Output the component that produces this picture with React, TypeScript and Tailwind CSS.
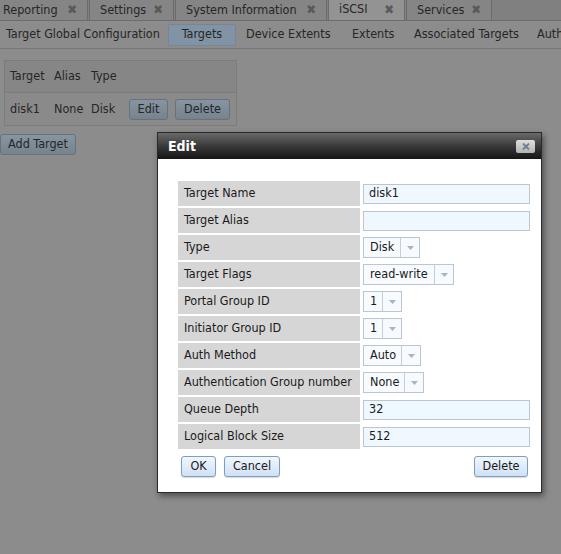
import React from "react";

const font = "font-['DejaVu_Sans_Condensed','DejaVu_Sans',sans-serif]";

function Tab({ label, width, active }: { label: string; width: string; active?: boolean }) {
  return (
    <div
      className={`${width} shrink-0 flex items-center justify-between pl-[10px] pr-[10px] border-r border-l border-[#6c6c6c] ${
        active ? "bg-[#939393] h-[21px]" : "bg-[#858585] h-[20px]"
      }`}
    >
      <span className="text-[#262626] whitespace-nowrap">{label}</span>
      <span className="text-[#595959] font-bold text-[13px]">✖</span>
    </div>
  );
}

function DimButton({ children, className = "" }: { children: React.ReactNode; className?: string }) {
  return (
    <button
      className={`h-[21px] rounded-[3px] border border-[#66727e] bg-gradient-to-b from-[#8794a1] to-[#76838f] text-[#262626] leading-none whitespace-nowrap ${className}`}
    >
      {children}
    </button>
  );
}

function LightButton({ children, width }: { children: React.ReactNode; width: string }) {
  return (
    <button
      className={`${width} h-[21px] rounded-[3px] border border-[#7d9ec2] bg-gradient-to-b from-[#f1f7fe] to-[#cfe1f4] text-[#1a1a1a] leading-none shadow-[0_1px_1px_rgba(0,0,0,0.15)]`}
    >
      {children}
    </button>
  );
}

function Select({ value, width }: { value: string; width: string }) {
  return (
    <div className={`${width} h-[21px] flex border border-[#bcc6d0] bg-[#f7fbff]`}>
      <div className="flex-1 flex items-center pl-[6px] text-[#1a1a1a]">{value}</div>
      <div className="w-[19px] border-l border-[#c6cfd8] flex items-center justify-center">
        <svg width="7" height="4" viewBox="0 0 7 4">
          <path d="M0 0 L7 0 L3.5 4 Z" fill="#a8b4c0" />
        </svg>
      </div>
    </div>
  );
}

function TextInput({ value }: { value: string }) {
  return (
    <div className="w-[167px] h-[20px] border border-[#bcc6d0] bg-[#f0f8ff] flex items-center pl-[5px] text-[#1a1a1a]">
      {value}
    </div>
  );
}

const rows: { label: string; field: React.ReactNode }[] = [
  { label: "Target Name", field: <TextInput value="disk1" /> },
  { label: "Target Alias", field: <TextInput value="" /> },
  { label: "Type", field: <Select value="Disk" width="w-[57px]" /> },
  { label: "Target Flags", field: <Select value="read-write" width="w-[91px]" /> },
  { label: "Portal Group ID", field: <Select value="1" width="w-[39px]" /> },
  { label: "Initiator Group ID", field: <Select value="1" width="w-[39px]" /> },
  { label: "Auth Method", field: <Select value="Auto" width="w-[58px]" /> },
  { label: "Authentication Group number", field: <Select value="None" width="w-[61px]" /> },
  { label: "Queue Depth", field: <TextInput value="32" /> },
  { label: "Logical Block Size", field: <TextInput value="512" /> },
];

export default function App() {
  return (
    <div className={`relative w-[561px] h-[554px] overflow-hidden bg-[#8c8c8c] text-[12.5px] ${font}`}>
      {/* top tabs */}
      <div className="flex h-[21px] bg-[#808080] border-b border-[#6c6c6c] items-end">
        <div className="-ml-[8px] flex items-end gap-[1px]">
          <Tab label="Reporting" width="w-[96px]" />
          <Tab label="Settings" width="w-[85px]" />
          <Tab label="System Information" width="w-[152px]" />
          <Tab label="iSCSI" width="w-[77px]" active />
          <Tab label="Services" width="w-[86px]" />
        </div>
      </div>

      {/* sub tabs */}
      <div className="flex items-center h-[28px] border-b border-[#767676] text-[#262626] whitespace-nowrap">
        <span className="shrink-0 pl-[6px] w-[168px]">Target Global Configuration</span>
        <div className="shrink-0 w-[68px] h-[22px] flex items-center justify-center bg-[#8193a4] border border-[#74869a] rounded-[2px]">
          Targets
        </div>
        <span className="shrink-0 pl-[10px] w-[116px]">Device Extents</span>
        <span className="shrink-0 w-[62px]">Extents</span>
        <span className="shrink-0 w-[123px]">Associated Targets</span>
        <span className="shrink-0">Authorized Access</span>
      </div>

      {/* targets table */}
      <div className="ml-[4px] mt-[11px] w-[233px] border border-[#7c7c7c] text-[#262626]">
        <div className="h-[32px] flex items-center pl-[5px] bg-[#868686] border-b border-[#7c7c7c]">
          <span className="w-[44px]">Target</span>
          <span className="w-[37px]">Alias</span>
          <span>Type</span>
        </div>
        <div className="h-[32px] flex items-center pl-[5px] bg-[#8a8a8a]">
          <span className="w-[44px]">disk1</span>
          <span className="w-[37px]">None</span>
          <span className="w-[38px]">Disk</span>
          <DimButton className="w-[39px]">Edit</DimButton>
          <DimButton className="ml-[7px] w-[55px]">Delete</DimButton>
        </div>
      </div>
      <div className="mt-[8px]">
        <DimButton className="w-[76px]">Add Target</DimButton>
      </div>

      {/* modal dialog */}
      <div className="absolute left-[157px] top-[132px] w-[385px] h-[361px] border border-[#2a2a2a] bg-white shadow-[2px_3px_6px_rgba(0,0,0,0.45)]">
        <div className="h-[26px] flex items-center justify-between pl-[10px] pr-[6px] bg-gradient-to-b from-[#6a6a6a] via-[#3a3a3a] to-[#161616]">
          <span className="text-white font-bold text-[14px]">Edit</span>
          <div className="w-[19px] h-[13px] rounded-[2px] bg-gradient-to-b from-[#dedede] to-[#b4b4b4] flex items-center justify-center">
            <svg width="8" height="7" viewBox="0 0 8 7">
              <path d="M1 0.5 L7 6.5 M7 0.5 L1 6.5" stroke="#6a7d93" strokeWidth="1.8" />
            </svg>
          </div>
        </div>
        <div className="pt-[22px] pl-[20px] pr-[10px]">
          <div className="flex flex-col gap-[2px]">
            {rows.map((r) => (
              <div key={r.label} className="flex h-[25px]">
                <div className="w-[182px] bg-[#d6d6d6] flex items-center pl-[6px] text-[#1a1a1a] whitespace-nowrap">
                  {r.label}
                </div>
                <div className="flex items-center pl-[3px]">{r.field}</div>
              </div>
            ))}
          </div>
          <div className="flex items-center mt-[7px] pl-[3px] pr-[3px]">
            <div className="flex gap-[8px]">
              <LightButton width="w-[35px]">OK</LightButton>
              <LightButton width="w-[56px]">Cancel</LightButton>
            </div>
            <div className="ml-auto">
              <LightButton width="w-[54px]">Delete</LightButton>
            </div>
          </div>
        </div>
      </div>
    </div>
  );
}
